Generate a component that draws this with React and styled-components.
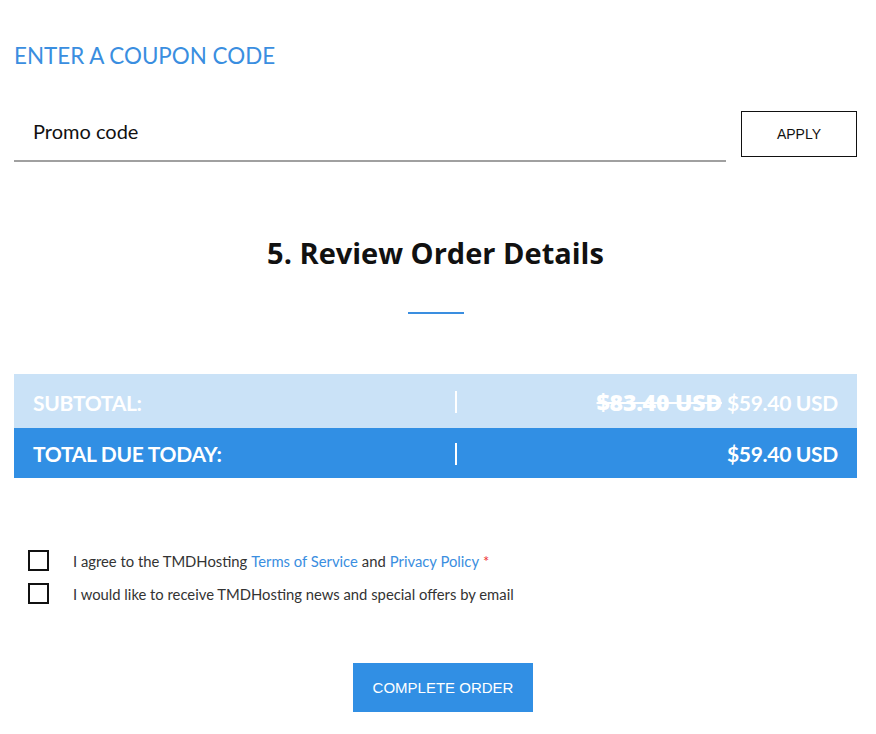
import styled, { createGlobalStyle } from "styled-components"

const GlobalStyle = createGlobalStyle`
    body {
        margin: 0;
        background: white;
        font-family: Lato, "Liberation Sans", sans-serif;
    }
`

const Page = styled.div`
    width: 876px;
    padding: 0 19px 0 14px;
    box-sizing: border-box;
`

const CouponTitle = styled.h2`
    margin: 0;
    padding-top: 42px;
    font-size: 22.4px;
    font-weight: 400;
    line-height: 28px;
    color: #3a8ee0;
`

const CouponRow = styled.div`
    display: flex;
    align-items: flex-start;
    margin-top: 41px;
`

const PromoInput = styled.input`
    flex: 1;
    height: 51px;
    padding: 0 0 10px 19px;
    box-sizing: border-box;
    border: none;
    border-bottom: 2px solid #a0a0a0;
    font-family: Lato, sans-serif;
    font-size: 20px;
    color: #111;
    outline: none;

    &::placeholder {
        color: #111;
    }
`

const ApplyButton = styled.button`
    width: 116px;
    height: 46px;
    margin-left: 15px;
    background: white;
    border: 1px solid #111;
    font-family: "Liberation Sans", Arial, sans-serif;
    font-size: 14px;
    color: #111;
`

const Heading = styled.h1`
    margin: 71px 0 0;
    text-align: center;
    font-family: "Open Sans", sans-serif;
    font-size: 29px;
    font-weight: 700;
    letter-spacing: 0;
    color: #111;
`

const Rule = styled.div`
    width: 56px;
    height: 2px;
    margin: 40px auto 0;
    background: #3a8ee0;
`

const Totals = styled.div`
    margin-top: 60px;
`

const TotalRow = styled.div`
    display: grid;
    grid-template-columns: 422px 1fr;
    align-items: center;
    height: ${({tall}) => tall ? 54 : 50}px;
    padding: 0 19px;
    background: ${({strong}) => strong ? "#318fe4" : "#cae2f7"};
    color: white;
    font-weight: 700;
    font-size: 21px;
    letter-spacing: -0.3px;
`

const Label = styled.span`
    padding-top: ${({shift}) => shift || 0}px;
`

const Amount = styled.span`
    position: relative;
    text-align: right;
    padding-top: ${({shift}) => shift || 0}px;

    &::before {
        content: "";
        position: absolute;
        left: 0;
        top: 50%;
        margin-top: -10px;
        width: 2px;
        height: 22px;
        background: white;
    }
`

const OldPrice = styled.s`
    font-family: "Open Sans", sans-serif;
    font-size: 23px;
    font-weight: 800;
    letter-spacing: -0.2px;
    margin-right: 5px;
    text-decoration-thickness: 2px;
`

const Agreements = styled.div`
    display: flex;
    flex-direction: column;
    gap: 12px;
    margin-top: 72px;
    padding-left: 14px;
`

const CheckRow = styled.label`
    display: flex;
    align-items: center;
    font-size: 14.8px;
    color: #333;
`

const Box = styled.span`
    width: 17px;
    height: 17px;
    border: 2px solid #111;
    margin-right: 24px;
`

const Link = styled.a`
    color: #3a8ee0;
    text-decoration: none;
    margin: 0 4px;
`

const Required = styled.span`
    color: #e33;
`

const CompleteButton = styled.button`
    display: block;
    width: 180px;
    height: 49px;
    margin: 59px 0 0 339px;
    background: #318fe4;
    border: none;
    color: white;
    font-family: "Liberation Sans", Arial, sans-serif;
    font-size: 15px;
`

export default function App() {
    return (
        <>
            <GlobalStyle />
            <Page>
                <CouponTitle>ENTER A COUPON CODE</CouponTitle>
                <CouponRow>
                    <PromoInput placeholder="Promo code" />
                    <ApplyButton>APPLY</ApplyButton>
                </CouponRow>

                <Heading>5. Review Order Details</Heading>
                <Rule />

                <Totals>
                    <TotalRow tall>
                        <Label shift={2}>SUBTOTAL:</Label>
                        <Amount shift={2}>
                            <OldPrice>$83.40 USD</OldPrice>$59.40 USD
                        </Amount>
                    </TotalRow>
                    <TotalRow strong>
                        <Label>TOTAL DUE TODAY:</Label>
                        <Amount>$59.40 USD</Amount>
                    </TotalRow>
                </Totals>

                <Agreements>
                    <CheckRow>
                        <Box />
                        I agree to the TMDHosting<Link href="#">Terms of Service</Link>and<Link href="#">Privacy Policy</Link><Required>*</Required>
                    </CheckRow>
                    <CheckRow>
                        <Box />
                        I would like to receive TMDHosting news and special offers by email
                    </CheckRow>
                </Agreements>

                <CompleteButton>COMPLETE ORDER</CompleteButton>
            </Page>
        </>
    )
}
